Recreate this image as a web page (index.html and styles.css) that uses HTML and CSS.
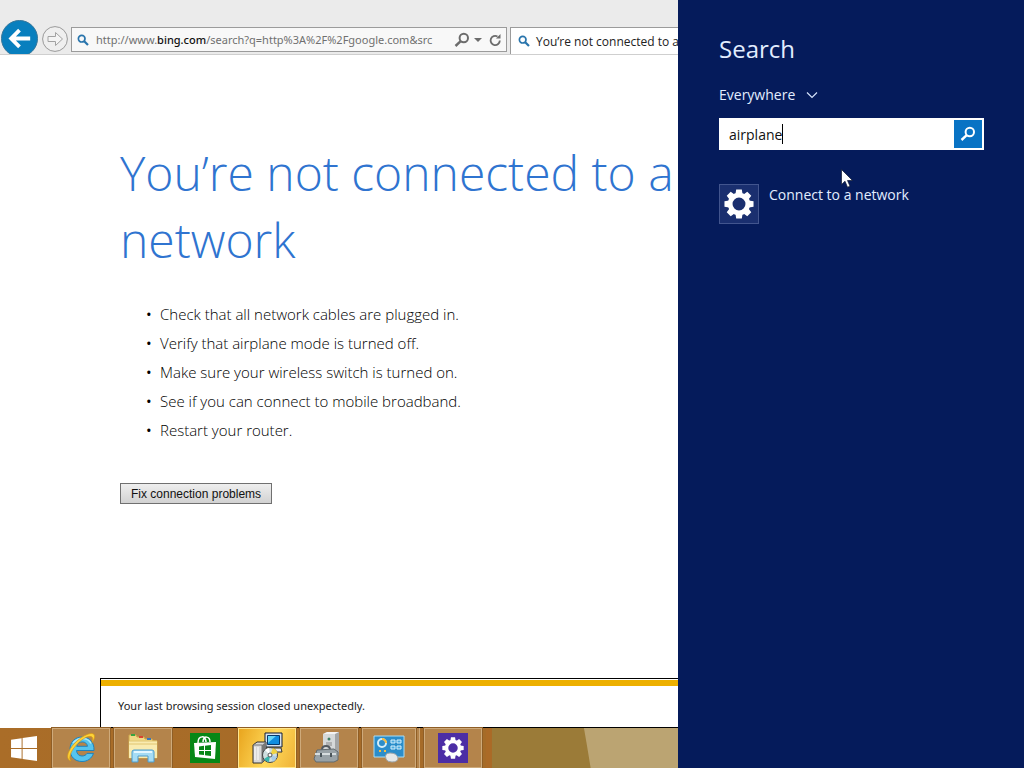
FILE: index.html
```html
<!DOCTYPE html>
<html lang="en">
<head>
<meta charset="utf-8">
<meta name="viewport" content="width=device-width, initial-scale=1">
<title>You’re not connected to a network</title>
<link rel="stylesheet" href="styles.css">
</head>
<body>
<svg class="defs" aria-hidden="true">
  <symbol id="gear" viewBox="-16 -16 32 32">
    <circle r="9.4" fill="none" stroke="currentColor" stroke-width="5"/>
    <g fill="currentColor">
      <path id="teeth" d="M-3.800-10.500-3-15.500h6l.8 5zM-3.800 10.500-3 15.500h6l.8-5zM-10.500-3.800-15.500-3v6l5 .8zM10.500-3.800 15.500-3v6l-5 .8z"/>
      <use href="#teeth" transform="rotate(45)"/>
    </g>
  </symbol>
  <symbol id="lens" viewBox="0 0 12 12">
    <circle cx="4.700" cy="4.700" r="3.300" fill="none" stroke="currentColor" stroke-width="1.700"/>
    <path d="M7.200 7.200 11 11" stroke="currentColor" stroke-width="2.200"/>
  </symbol>
  <symbol id="lens-left" viewBox="0 0 16 16">
    <circle cx="9.800" cy="6" r="4.200" fill="none" stroke="currentColor" stroke-width="2"/>
    <path d="M6.700 9.200 1.500 14" stroke="currentColor" stroke-width="2.400"/>
  </symbol>
</svg>

<div class="screen">
  <div class="desktop">
    <header class="toolbar">
      <button class="back" aria-label="Back">
        <svg viewBox="0 0 36 36"><path d="M29 18H10M18 9.500 9.500 18l8.500 8.500" fill="none" stroke="#fff" stroke-width="4"/></svg>
      </button>
      <button class="forward" aria-label="Forward">
        <svg viewBox="0 0 26 26"><circle cx="13" cy="13" r="12.400" fill="#efefef" stroke="#999"/><path d="M6 10.500h7.500V6.500l7 6.500-7 6.500v-4H6z" fill="#f4f4f4" stroke="#a2a2a2"/></svg>
      </button>
      <div class="address">
        <svg class="icon-12 blue"><use href="#lens"/></svg>
        <div class="url" role="textbox" aria-label="Address" contenteditable="true" spellcheck="false">http://www.<b>bing.com</b>/search?q=http%3A%2F%2Fgoogle.com&amp;src</div>
        <button class="tool" aria-label="Search"><svg class="icon-16"><use href="#lens-left"/></svg></button>
        <button class="tool" aria-label="Show address list"><svg class="icon-8" viewBox="0 0 8 8"><path d="M0 2h8L4 6z" fill="currentColor"/></svg></button>
        <button class="tool reload" aria-label="Refresh"><svg class="icon-14" viewBox="0 0 14 14"><path d="M11.800 7.500A4.600 4.600 0 1 1 9.500 3.500" fill="none" stroke="currentColor" stroke-width="1.800"/><path d="M8 5.500h4.500V1z" fill="currentColor"/></svg></button>
      </div>
      <button class="tab">
        <svg class="icon-12 blue"><use href="#lens"/></svg>
        <span>You’re not connected to a ...</span>
      </button>
    </header>

    <main class="page">
      <h1>You’re not connected to a network</h1>
      <ul class="tips">
        <li>Check that all network cables are plugged in.</li>
        <li>Verify that airplane mode is turned off.</li>
        <li>Make sure your wireless switch is turned on.</li>
        <li>See if you can connect to mobile broadband.</li>
        <li>Restart your router.</li>
      </ul>
      <button class="fix">Fix connection problems</button>
    </main>

    <div class="notice" role="status">Your last browsing session closed unexpectedly.</div>

    <nav class="taskbar" aria-label="Taskbar">
      <svg class="wallpaper" viewBox="0 0 200 40" preserveAspectRatio="none" aria-hidden="true">
        <path d="M6 0H200V40H6z" fill="#9b7b38"/><path d="M0 0h6v40H0z" fill="#ab6a27"/><path d="M102 0h98v40h-91q-4-24-7-40z" fill="#bba472"/>
      </svg>
      <button class="start" aria-label="Start">
        <svg viewBox="0 0 28 26"><path d="M0 4 11 2.300V12.500H0zM12 2.200 27 0v12.500H12zM0 13.500h11v10.200L0 22zM12 13.500h15V26l-15-2.200z" fill="#fff"/></svg>
      </button>
      <button class="task" aria-label="Internet Explorer">
        <svg viewBox="0 0 32 32">
          <path d="M29 18.500H11.500c.3 3.600 2.500 5.500 5.500 5.500 2.400 0 4-1 5-2.600h6.500C26.600 26.500 22.600 29.500 17 29.500 9.800 29.500 5 24.600 5 17.500S9.800 5 17 5c7.500 0 12.300 5.200 12 13.500zM22.500 14.300c-.4-2.700-2.300-4.400-5.200-4.400-3 0-4.900 1.700-5.600 4.400z" fill="#55c4ee" stroke="#1f83bd"/>
          <path d="M8 11Q12 6 18 6.500q6 .5 8 5" fill="none" stroke="#a9e7fb" stroke-width="1.500"/>
          <path d="M6 29C-1 27 4 16 12 9 20 2 29-1 29.500 4c.2 2-1 4.500-2.500 6.500 1-3 1.200-5.500-1-6-4-1-11 4-15.500 9.500C6 19 3 26 6 29z" fill="#ffd438" stroke="#d99a14" stroke-width=".7"/>
        </svg>
      </button>
      <button class="task" aria-label="File Explorer">
        <svg viewBox="0 0 32 32">
          <path d="M2 3h7l1 2h7l1 2h7l1 2h4v17H2z" fill="#f0d987" stroke="#cfa94c"/>
          <path d="M2 9h28v17H2z" fill="#f9ebb0"/><path d="M2 9h28M2 12h28" stroke="#e1c571"/>
          <path d="M4 3h4" stroke="#36a441" stroke-width="2"/><path d="M12 5h4" stroke="#d94331" stroke-width="2"/><path d="M20 7h4" stroke="#3977bd" stroke-width="2"/>
          <path d="M5 30V20q0-2 2-2h18q2 0 2 2v10h-6v-6h-10v6z" fill="#a5dcf4" stroke="#4d9ccd"/><path d="M7 20h18" stroke="#e3f7ff" stroke-width="2"/>
        </svg>
      </button>
      <button class="task plain" aria-label="Store">
        <svg viewBox="0 0 32 32">
          <path d="M1 1h30v30H1z" fill="#068716"/>
          <path d="m5 11 22-1-1 17-20-2z" fill="#fff"/><path d="M9 11c0-8 8-8 8-1M14 10c0-7 7-6 7 0" fill="none" stroke="#fff" stroke-width="1.500"/>
          <path d="m10 14.500 5-.7v4.200h-5zM16 13.700l6-.8V18h-6zM10 19h5v4l-5-.6zM16 19h6v5l-6-.8z" fill="#068716"/>
        </svg>
      </button>
      <button class="task active" aria-label="Setup">
        <svg viewBox="0 0 32 32">
          <path d="M14 1h17v14H14z" fill="#d8e3ee" stroke="#111b35"/><path d="M16.500 3.500h12v9h-12z" fill="#108de0" stroke="#06396b"/><path d="m17 11 8-7h-8z" fill="#65d5f7"/>
          <path d="M14 16h16l1 4H15z" fill="#e8e8e8" stroke="#333"/>
          <path d="m2 13 4-3h9v17l-4 4H2z" fill="#d7d7d7" stroke="#303030"/><path d="M2 13h9v18" fill="none" stroke="#777"/><path d="m11 13 4-3v17l-4 4z" fill="#777"/><path d="M4 15v13M7 15v13" stroke="#fff"/>
          <circle cx="19" cy="23" r="7.500" fill="#cfdedf" stroke="#444"/><path d="m19 23 3-7q4 2 4.500 5z" fill="#f0d342"/><path d="m19 23-6 4q2 3 5 3z" fill="#39b5ac"/><path d="m19 23-5-5q2-2 4-2z" fill="#fff"/><path d="m19 23 7 2q-1 3-4 5z" fill="#a9cce5"/>
          <circle cx="19" cy="23" r="2" fill="#fff" stroke="#555"/>
        </svg>
      </button>
      <button class="task" aria-label="Device tools">
        <svg viewBox="0 0 32 32">
          <path d="m10 2 4-2h12v23l-4 3H10z" fill="#a3a5a5"/><path d="M10 2h12v24H10z" fill="#d6d9d9"/><path d="m10 2 4-2h12l-4 2z" fill="#f3f3f3"/><circle cx="16" cy="7" r="1.500" fill="#3e7f65"/><path d="M13 11h6M13 13h6" stroke="#888"/>
          <path d="M9 18q0-4 4-4t4 4" fill="none" stroke="#53595e" stroke-width="2"/>
          <path d="m4 18 17-1 4 3v8l-4 2H3l-2-3z" fill="#98a2a7" stroke="#626a6d"/><path d="M2 22h21" stroke="#d6dddf" stroke-width="2"/><path d="M7 21h2v4H7zM17 21h2v4h-2z" fill="#4b565b"/>
        </svg>
      </button>
      <button class="task group" aria-label="Control Panel">
        <svg viewBox="0 0 32 32">
          <path d="M1 4h30v21H1z" fill="#2b8dca" stroke="#a9ddf5"/>
          <circle cx="9" cy="11" r="4" fill="none" stroke="#d3edf8" stroke-width="2"/><path d="M9 7a4 4 0 0 1 4 4" fill="none" stroke="#f5bd42" stroke-width="2"/>
          <path d="M18 8h4v3h-4zM24 8h4v3h-4zM18 14h4v3h-4zM24 14h4v3h-4z" fill="#4caade" stroke="#d4effc"/>
          <path d="M6 19h2M11 19h2" stroke="#f4be44" stroke-width="2"/><path d="M13 27q-2-6 4-6 7 0 8 5 0 4-6 4-5 0-6-3z" fill="#e5e7e7" stroke="#9ca4a8"/>
        </svg>
      </button>
      <button class="task" aria-label="PC settings">
        <svg viewBox="0 0 32 32"><path d="M1 1h30v30H1z" fill="#4c2da5"/><use href="#gear" x="5" y="5" width="22" height="22" color="#fff"/></svg>
      </button>
    </nav>
  </div>

  <aside class="search">
    <h2>Search</h2>
    <div class="scope">
      <select aria-label="Search scope"><option>Everywhere</option><option>Settings</option><option>Files</option></select>
      <svg class="icon-12" viewBox="0 0 12 12"><path d="m1 3.500 5 5 5-5" fill="none" stroke="#d5e2fa" stroke-width="1.200"/></svg>
    </div>
    <form class="box">
      <input type="text" aria-label="Search" value="airplane" spellcheck="false">
      <span class="caret"></span>
      <button type="button" aria-label="Search"><svg class="icon-16"><use href="#lens-left"/></svg></button>
    </form>
    <a class="result" href="#network">
      <span class="tile"><svg viewBox="0 0 32 32"><use href="#gear"/></svg></span>
      <span>Connect to a network</span>
    </a>
  </aside>

  <svg class="pointer" viewBox="0 0 12 19" aria-hidden="true"><path d="M.5.500v15l3.500-3.300 2.500 6 2.500-1-2.500-5.700h5z" fill="#fff" stroke="#10182f" stroke-width=".7"/></svg>
</div>
</body>
</html>
```
FILE: styles.css
```css
* { box-sizing: border-box; }
body { margin: 0; font-family: "Open Sans", "Noto Sans", sans-serif; }
button, input, select { margin: 0; padding: 0; border: 0; font: inherit; color: inherit; background: none; border-radius: 0; }
svg { display: block; flex: none; }
.defs { position: absolute; width: 0; height: 0; }
.icon-8 { width: 8px; height: 8px; }
.icon-12 { width: 12px; height: 12px; }
.icon-14 { width: 14px; height: 14px; }
.icon-16 { width: 16px; height: 16px; }
.blue { color: #2874ac; }

.screen { position: relative; display: grid; grid-template-columns: minmax(0, 1fr) 346px; min-height: 100vh; overflow: hidden; }
.desktop { display: flex; flex-direction: column; background: #fff; overflow: hidden; }

.toolbar { display: flex; align-items: flex-end; height: 55px; padding-left: 1px; background: #ebebeb; border-bottom: 1px solid #cfcfcf; overflow: hidden; }
.back { flex: none; width: 37px; height: 37px; margin-bottom: -3px; border-radius: 50%; background: #087fbe; border: 1px solid #35769a; }
.forward { flex: none; width: 26px; margin: 0 3px 2px 4px; }
.address { flex: none; display: flex; align-items: center; width: 436px; height: 25px; margin-bottom: 2px; padding: 0 4px 0 5px; border: 1px solid #9b9b9b; background: #f8f8f8; color: #6c6c6c; }
.url { flex: 1; margin-left: 7px; font-family: "Noto Sans", sans-serif; font-size: 11px; line-height: 20px; white-space: nowrap; color: #707070; }
.url b { font-weight: 500; color: #111; }
.tool { margin-left: 4px; }
.reload { margin-left: 6px; }
.tab { flex: none; display: flex; align-items: center; gap: 6px; width: 220px; height: 27px; margin-left: 3px; padding-left: 7px; border: 1px solid #9b9b9b; border-bottom: 0; background: #fff; color: #222; font-size: 12px; white-space: nowrap; }

.page { flex: 1; padding: 84px 0 0 120px; }
h1 { margin: 0; font-size: 48px; font-weight: 300; line-height: 67px; color: #2f74d0; }
.tips { display: grid; gap: 7px; margin: 30px 0 0; padding-left: 26px; list-style: none; font-size: 15px; font-weight: 300; line-height: 22px; color: #000; }
.tips li { display: flex; }
.tips li::before { content: "•"; flex: none; width: 14px; font-weight: 400; }
.fix { display: block; height: 21px; margin-top: 42px; padding: 0 10px; border: 1px solid #707070; background: linear-gradient(#eee, #d2d2d2); font-family: "Liberation Sans", sans-serif; font-size: 12px; color: #111; }
.notice { margin-left: 100px; padding: 16px 17px 11px; border: 1px solid #000; border-right: 0; background: linear-gradient(#fff 1px, #edb000 1px, #edb000 7px, #fff 7px); font-family: "Noto Sans", sans-serif; font-size: 11px; line-height: 21px; color: #222; }

.taskbar { position: relative; display: flex; gap: 4px; height: 40px; background: linear-gradient(90deg, #aa6d28, #a66b28 300px, #a56b28); }
.wallpaper { position: absolute; right: 0; top: 0; width: 192px; height: 40px; }
.start { flex: none; display: grid; place-items: center; width: 48px; }
.start svg { width: 27px; height: 25px; }
.task { flex: none; display: grid; place-items: center; width: 58px; border: 1px solid #ceaa7b; background: #b4844b; outline: 1px solid #8f5e26; outline-offset: 0; }
.task svg { width: 32px; height: 32px; }
.plain { border-color: transparent; background: none; outline: 0; }
.active { border-color: #ffe58d; background: linear-gradient(110deg, #e9a51e, #ffd95a 55%, #efb237); }
.group { width: 54px; margin-right: 4px; box-shadow: 3px 0 #b4844b, 4px 0 #ceaa7b; }

.search { display: flex; flex-direction: column; padding: 31px 40px 0 41px; background: #051b5b; color: #e2edff; }
.search h2 { margin: 0; font-size: 24px; font-weight: 400; line-height: 36px; }
.scope { display: flex; align-items: center; gap: 10px; margin-top: 17px; font-size: 14px; line-height: 22px; }
.scope select { appearance: none; }
.scope option { color: #000; }
.box { position: relative; display: flex; height: 32px; margin-top: 12px; padding: 2px; background: #fff; color: #111; font-size: 14px; }
.box input { flex: 1; min-width: 0; padding-left: 8px; outline: 0; }
.caret { position: absolute; left: 63px; top: 6px; width: 1px; height: 20px; background: #000; }
.box button { display: grid; place-items: center; width: 28px; background: #0873c4; color: #fff; }
.result { display: flex; gap: 10px; margin-top: 34px; color: inherit; text-decoration: none; font-size: 14px; line-height: 22px; }
.tile { display: grid; place-items: center; width: 40px; height: 40px; border: 1px solid #42558e; background: #1a2f6f; color: #fff; }
.tile svg { width: 30px; height: 30px; }
.pointer { position: absolute; left: 841px; top: 169px; width: 12px; height: 19px; }
```
